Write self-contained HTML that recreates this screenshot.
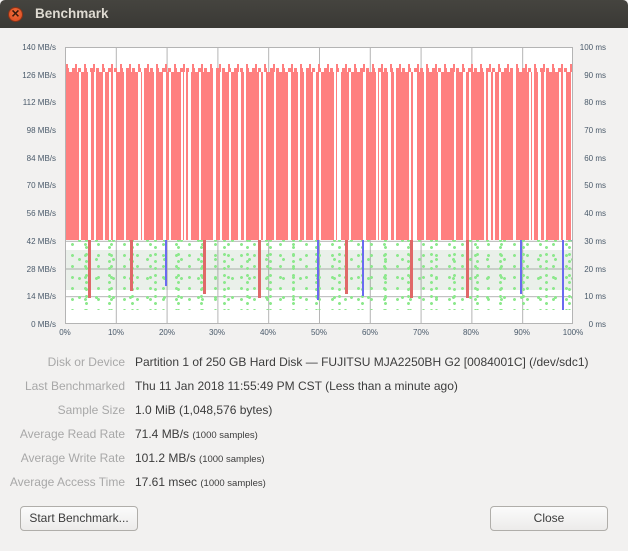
<!DOCTYPE html>
<html><head><meta charset="utf-8"><style>
*{margin:0;padding:0;box-sizing:border-box}
body{width:628px;height:551px;overflow:hidden;background:#f2f1f0;font-family:"Liberation Sans","DejaVu Sans",sans-serif;position:relative}
.tb{position:absolute;left:0;top:0;width:628px;height:28px;background:linear-gradient(#45443f,#3a3935);border-radius:5px 5px 0 0}
.tb .x{position:absolute;left:8px;top:7px;width:15px;height:15px;border-radius:50%;background:radial-gradient(circle at 50% 40%,#f0703e,#d9481e);border:1px solid #8a3317}
.tb .x:after{content:"×";position:absolute;left:0;top:-3px;width:13px;text-align:center;color:#3a1a0c;font-size:14px;font-weight:bold}
.tb .t{position:absolute;left:35px;top:6px;color:#dfdbd2;font-weight:bold;font-size:13.5px}
.lab{position:absolute;right:503px;font-size:12px;color:#a8a8a8;text-align:right;white-space:nowrap}
.val{position:absolute;left:135px;font-size:12px;color:#3c3c3c;white-space:nowrap}
.val small{font-size:9.5px}
.btn{position:absolute;height:25px;border:1px solid #b0aeaa;border-radius:4px;background:linear-gradient(#fbfbfb,#ecebea);font-size:12px;color:#3c3c3c;text-align:center;line-height:23px}
.plot{position:absolute;left:65px;top:47px;width:508px;height:277px;background:#fff;border:1px solid #b4b4b4;
background-image:linear-gradient(90deg,#b4b4b4 1px,transparent 1px),linear-gradient(#b4b4b4 1px,transparent 1px);
background-size:50.8px 100%,100% 27.7px;background-position:-1px 0,0 -1px}
.green{position:absolute;left:66px;top:228px;width:506px;height:82px;
background-image:radial-gradient(circle,#8de88d 1.3px,transparent 1.7px),radial-gradient(circle,#8de88d 1.3px,transparent 1.7px),radial-gradient(circle,#8de88d 1.3px,transparent 1.7px),linear-gradient(rgba(80,130,80,0.12),rgba(80,130,80,0.12));
background-size:13px 11px,17px 19px,23px 7px,100% 40px;background-position:0 0,5px 3px,9px 2px,0 22px;background-repeat:repeat,repeat,repeat,no-repeat}
.red{position:absolute;left:66px;top:72px;width:506px;height:168px;background:#ff7f7f}
.gaps{position:absolute;left:66px;top:72px;width:506px;height:168px;
background-image:repeating-linear-gradient(90deg,transparent 0 13px,#fff 13px 15px),repeating-linear-gradient(90deg,transparent 0 22px,#fff 22px 25px),repeating-linear-gradient(90deg,transparent 0 37px,#fff 37px 39px)}
.rb{position:absolute;top:236px;width:3px;height:62px;background:#e06868}
.top{position:absolute;left:66px;top:64px;width:506px;height:10px;
background-image:repeating-linear-gradient(90deg,#ff7f7f 0 3px,transparent 3px 6px),repeating-linear-gradient(90deg,#ff7f7f 0 2px,transparent 2px 9px);background-size:100% 6px,100% 10px;background-position:0 4px,0 0;background-repeat:no-repeat}
</style></head><body>
<div class="tb"><div class="x"></div><div class="t">Benchmark</div></div>
<div class="plot"></div>
<div class="green"></div>
<svg style="position:absolute;left:0;top:0" width="628" height="345">
<polyline points="66,146 100,149 150,155 200,161 250,168 300,176 350,184 400,192 450,203 500,215 540,226 572,240" stroke="#7474f0" stroke-width="1.5" fill="none"/>
<g font-family="Liberation Sans" font-size="8" fill="#4a5a6a" text-anchor="end">
<text x="56" y="327">0 MB/s</text><text x="56" y="299">14 MB/s</text><text x="56" y="272">28 MB/s</text><text x="56" y="244">42 MB/s</text><text x="56" y="216">56 MB/s</text><text x="56" y="188">70 MB/s</text><text x="56" y="161">84 MB/s</text><text x="56" y="133">98 MB/s</text><text x="56" y="105">112 MB/s</text><text x="56" y="78">126 MB/s</text><text x="56" y="50">140 MB/s</text>
</g>
<g font-family="Liberation Sans" font-size="8" fill="#4a5a6a" text-anchor="end">
<text x="606" y="327">0 ms</text><text x="606" y="299">10 ms</text><text x="606" y="272">20 ms</text><text x="606" y="244">30 ms</text><text x="606" y="216">40 ms</text><text x="606" y="188">50 ms</text><text x="606" y="161">60 ms</text><text x="606" y="133">70 ms</text><text x="606" y="105">80 ms</text><text x="606" y="78">90 ms</text><text x="606" y="50">100 ms</text>
</g>
<g font-family="Liberation Sans" font-size="8" fill="#4a5a6a" text-anchor="middle">
<text x="65" y="335">0%</text><text x="116" y="335">10%</text><text x="167" y="335">20%</text><text x="217" y="335">30%</text><text x="268" y="335">40%</text><text x="319" y="335">50%</text><text x="370" y="335">60%</text><text x="421" y="335">70%</text><text x="471" y="335">80%</text><text x="522" y="335">90%</text><text x="573" y="335">100%</text>
</g>
</svg>
<div class="rb" style="left:88px"></div>
<div class="rb" style="left:130px;height:55px"></div>
<div class="rb" style="left:165px;height:50px;background:#6a6af0;width:2px"></div>
<div class="rb" style="left:203px;height:58px"></div>
<div class="rb" style="left:258px"></div>
<div class="rb" style="left:317px;height:64px;background:#6a6af0;width:2px"></div>
<div class="rb" style="left:345px;height:58px"></div>
<div class="rb" style="left:362px;height:60px;background:#6a6af0;width:2px"></div>
<div class="rb" style="left:410px"></div>
<div class="rb" style="left:466px"></div>
<div class="rb" style="left:520px;height:58px;background:#6a6af0;width:2px"></div>
<div class="rb" style="left:562px;height:74px;background:#6a6af0;width:2px"></div>
<div class="top"></div>
<div class="red"></div>
<div class="gaps"></div>
<div class="lab" style="top:355px">Disk or Device</div><div class="val" style="top:355px">Partition 1 of 250 GB Hard Disk — FUJITSU MJA2250BH G2 [0084001C] (/dev/sdc1)</div>
<div class="lab" style="top:379px">Last Benchmarked</div><div class="val" style="top:379px">Thu 11 Jan 2018 11:55:49 PM CST (Less than a minute ago)</div>
<div class="lab" style="top:403px">Sample Size</div><div class="val" style="top:403px">1.0 MiB (1,048,576 bytes)</div>
<div class="lab" style="top:427px">Average Read Rate</div><div class="val" style="top:427px">71.4 MB/s <small>(1000 samples)</small></div>
<div class="lab" style="top:451px">Average Write Rate</div><div class="val" style="top:451px">101.2 MB/s <small>(1000 samples)</small></div>
<div class="lab" style="top:475px">Average Access Time</div><div class="val" style="top:475px">17.61 msec <small>(1000 samples)</small></div>
<div class="btn" style="left:20px;top:506px;width:118px">Start Benchmark...</div>
<div class="btn" style="left:490px;top:506px;width:118px">Close</div>
</body></html>
